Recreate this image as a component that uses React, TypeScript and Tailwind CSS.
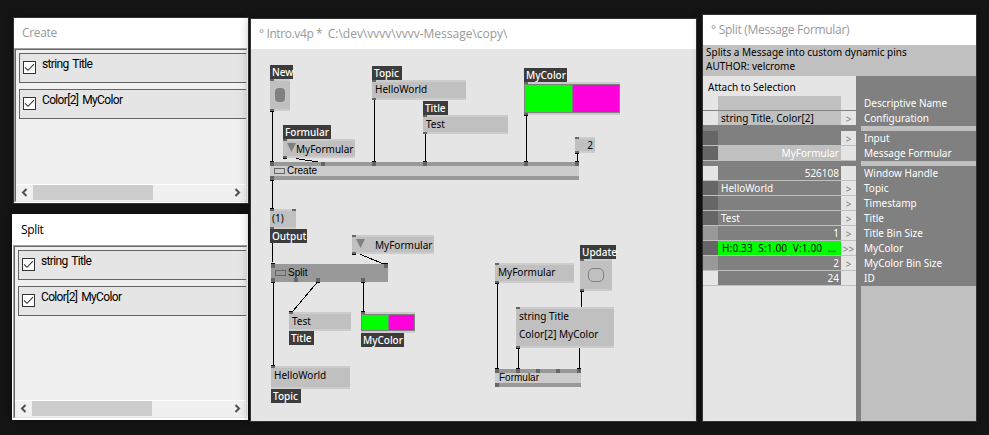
import type { ReactNode } from "react";

const lucida = "font-['Noto_Sans','Open_Sans',sans-serif]";

/* ---------- list windows ---------- */

function CheckRow({ text }: { text: string }) {
  return (
    <div className="flex h-[30px] shrink-0 border border-r-0 border-[#646464] bg-[#e5e5e5]">
      <svg className="mt-[7px] ml-[3px] h-[13px] w-[13px]" viewBox="0 0 13 13">
        <rect x="0.5" y="0.5" width="12" height="12" fill="#fff" stroke="#333" />
        <path d="M2 6.3 L5 9.3 L11 3.2" fill="none" stroke="#333" strokeWidth="1.1" />
      </svg>
      <span className="ml-[6px] mt-[3px] whitespace-pre font-['Roboto',sans-serif] text-[12px] leading-[14px] tracking-[-0.65px] [word-spacing:1.5px] text-black">{text}</span>
    </div>
  );
}

function ListWindow({ title, active, frame }: { title: string; active?: boolean; frame: string }) {
  return (
    <section className={`absolute flex flex-col bg-white ${frame}`}>
      <header className={`flex shrink-0 items-center font-['Open_Sans',sans-serif] text-[12px] tracking-[-0.35px] ${active ? "h-[31px] pl-[9px] text-black" : "h-[30px] pl-[8px] text-[#999]"}`}>
        {title}
      </header>
      <div className={`mr-px flex flex-1 flex-col border-t border-l border-[#a0a0a0] ${active ? "mb-[2px] ml-px" : "mb-px"}`}>
        <div className="flex flex-1 flex-col border-t border-l border-r border-b border-t-[#696969] border-l-[#696969] border-r-[#e3e3e3] border-b-[#e3e3e3] bg-[#f0f0f0]">
          <div className="flex flex-1 flex-col gap-[6px] pt-[3px] pl-[3px]">
            <CheckRow text="string Title" />
            <CheckRow text="Color[2] MyColor" />
          </div>
          <div className="flex h-[17px] shrink-0 items-stretch border-t border-white pb-px">
            <svg className="h-[15px] w-[17px]" viewBox="0 0 17 15">
              <path d="M10.5 4 L7 7.5 L10.5 11" fill="none" stroke="#505050" strokeWidth="2" />
            </svg>
            <div className="w-[120px] bg-[#cdcdcd]" />
            <div className="flex-1" />
            <svg className="h-[15px] w-[17px]" viewBox="0 0 17 15">
              <path d="M6.5 4 L10 7.5 L6.5 11" fill="none" stroke="#505050" strokeWidth="2" />
            </svg>
          </div>
        </div>
      </div>
    </section>
  );
}

/* ---------- patch nodes ---------- */

function Pin({ at }: { at: string }) {
  return <i className={`absolute h-[2px] w-[4px] bg-[#666] ${at}`} />;
}

function Tag({ at, children }: { at: string; children: ReactNode }) {
  return (
    <div className={`absolute h-[14px] whitespace-pre bg-[#3c3c3c] pl-[2px] text-[10px] font-medium leading-[14px] text-white ${at}`}>
      {children}
    </div>
  );
}

function IOBox({ at, children, out = true, pin = true }: { at: string; children?: ReactNode; out?: boolean; pin?: boolean }) {
  return (
    <div className={`absolute border-y-2 border-[#ccc] bg-[#c0c0c0] ${at}`}>
      {children}
      {pin && <Pin at="left-0 -top-[2px]" />}
      {out && <Pin at="left-0 -bottom-[2px]" />}
    </div>
  );
}

function NodeText({ at, children }: { at: string; children: ReactNode }) {
  return <span className={`absolute whitespace-pre text-[10px] leading-[14px] text-black ${at}`}>{children}</span>;
}

function Swatches({ at }: { at: string }) {
  return (
    <div className={`absolute flex divide-x divide-[#808080] border border-[#808080] ${at}`}>
      <div className="flex-1 bg-[#00ff00]" />
      <div className="flex-1 bg-[#ff00dc]" />
    </div>
  );
}

function Triangle({ at }: { at: string }) {
  return (
    <svg className={`absolute h-[9px] w-[9px] ${at}`} viewBox="0 0 9 9">
      <path d="M0 0 H9 L4.5 9 Z" fill="#808080" />
    </svg>
  );
}

function Square({ at }: { at: string }) {
  return <i className={`absolute h-[4px] w-[4px] bg-[#666] ${at}`} />;
}

function Patch() {
  return (
    <section className="absolute left-[250px] top-[18px] h-[404px] w-[447px] border border-[#333] bg-[#e5e5e5] shadow-[0_0_10px_rgba(0,0,0,0.35)]">
      <header className="flex h-[30px] items-center whitespace-pre bg-white pl-[8px] font-['Open_Sans',sans-serif] text-[12px] text-[#999]">
        <span className="tracking-[-0.4px]">{"° Intro.v4p *  "}</span>
        <span>{"C:\\dev\\vvvv\\vvvv-Message\\copy\\"}</span>
      </header>
      {/* the canvas is offset so that nodes use desktop coordinates */}
      <div className={`absolute -left-[251px] -top-[19px] h-[435px] w-[989px] ${lucida}`}>
        <svg className="absolute inset-0 h-[435px] w-[989px]" viewBox="0 0 989 435" shapeRendering="crispEdges">
          <g fill="none" stroke="#000" strokeWidth="1">
            <path d="M272.5 111V162M374.5 99V162M425.5 133V162M526.5 114V162M577.5 152V162M272.5 180V209M272.5 243V262M273.5 282V366M363.5 282V312M497.5 282V369M518.5 347V369M581.5 290V307M579.5 348V368" />
            <path d="M296 158.5L321 162.5M360.5 254.5L385 264.5M317.5 282L293 311" />
            <path d="M270 111.5h4M372 99.5h4M423 133.5h4M524 115.5h4M575 153.5h4M270 161.5h4M372 161.5h4M423 161.5h4M524 161.5h4M575 161.5h4M270 180.5h4M270 208.5h4M271 263.5h4M271 282.5h4M316 282.5h4M361 282.5h4M361 311.5h4M289 311.5h4M271 365.5h4M384 263.5h4M352 254.5h4M283 158.5h4M495 283.5h4M516 348.5h4M580 291.5h4M495 368.5h4M516 368.5h4M577 368.5h4" />
          </g>
        </svg>

        <IOBox at="left-[270px] top-[79px] h-[32px] w-[20px]">
          <i className="absolute left-[5px] top-[7px] h-[14px] w-[10px] rounded-[4px] bg-[#808080]" />
        </IOBox>
        <Tag at="left-[270px] top-[65px] w-[23px]">New</Tag>

        <IOBox at="left-[372px] top-[80px] h-[20px] w-[94px]">
          <NodeText at="left-[3px] top-0">HelloWorld</NodeText>
        </IOBox>
        <Tag at="left-[372px] top-[66px] w-[30px]">Topic</Tag>

        <IOBox at="left-[423px] top-[115px] h-[19px] w-[85px]">
          <NodeText at="left-[3px] top-0">Test</NodeText>
        </IOBox>
        <Tag at="left-[423px] top-[101px] w-[25px]">Title</Tag>

        <IOBox at="left-[283px] top-[139px] h-[19px] w-[72px]">
          <Triangle at="left-[4px] top-[2px]" />
          <NodeText at="left-[13px] top-px">MyFormular</NodeText>
        </IOBox>
        <Tag at="left-[283px] top-[125px] w-[48px]">Formular</Tag>

        <IOBox at="left-[524px] top-[82px] h-[33px] w-[96px]">
          <Swatches at="inset-0" />
        </IOBox>
        <Tag at="left-[524px] top-[68px] w-[43px]">MyColor</Tag>

        <IOBox at="left-[575px] top-[137px] h-[16px] w-[20px]">
          <NodeText at="right-[2px] -top-px">2</NodeText>
        </IOBox>

        <div className="absolute left-[270px] top-[162px] h-[18px] w-[309px] border-y-4 border-[#999] bg-[#ccc]">
          <i className="absolute left-[4px] top-[2px] h-[6px] w-[11px] border border-[#666]" />
          <span className="absolute left-[17px] -top-[2px] font-['Liberation_Sans',sans-serif] text-[10px] leading-[14px] text-black">Create</span>
          <Square at="left-0 -top-[4px]" />
          <Square at="left-[51px] -top-[4px]" />
          <Square at="left-[102px] -top-[4px]" />
          <Square at="left-[153px] -top-[4px]" />
          <Square at="left-[254px] -top-[4px]" />
          <Square at="left-[305px] -top-[4px]" />
          <Square at="left-0 -bottom-[4px]" />
        </div>

        <IOBox at="left-[270px] top-[209px] h-[20px] w-[26px]">
          <NodeText at="left-[2px] top-0">(1)</NodeText>
          <Pin at="left-[22px] -top-[2px]" />
        </IOBox>
        <Tag at="left-[270px] top-[229px] w-[37px]">Output</Tag>

        <IOBox at="left-[352px] top-[235px] h-[19px] w-[82px]">
          <Triangle at="left-[4px] top-[2px]" />
          <NodeText at="left-[23px] top-px">MyFormular</NodeText>
        </IOBox>

        <div className="absolute left-[271px] top-[264px] h-[18px] w-[117px] bg-[#999]">
          <i className="absolute left-[4px] top-[6px] h-[6px] w-[11px] border border-[#666]" />
          <span className="absolute left-[17px] top-[2px] font-['Liberation_Sans',sans-serif] text-[10px] leading-[14px] text-black">Split</span>
          <Square at="left-0 top-0" />
          <Square at="right-0 top-0" />
          <Square at="left-0 bottom-0" />
          <Square at="left-[23px] bottom-0" />
          <Square at="left-[45px] bottom-0" />
          <Square at="left-[90px] bottom-0" />
        </div>

        <IOBox at="left-[289px] top-[312px] h-[19px] w-[62px]" out={false}>
          <NodeText at="left-[3px] top-0">Test</NodeText>
        </IOBox>
        <Tag at="left-[289px] top-[331px] w-[25px]">Title</Tag>

        <IOBox at="left-[361px] top-[312px] h-[21px] w-[54px]" out={false}>
          <Swatches at="inset-0" />
        </IOBox>
        <Tag at="left-[361px] top-[333px] w-[43px]">MyColor</Tag>

        <IOBox at="left-[271px] top-[366px] h-[23px] w-[79px]" out={false}>
          <NodeText at="left-[3px] top-0">HelloWorld</NodeText>
        </IOBox>
        <Tag at="left-[271px] top-[389px] w-[30px]">Topic</Tag>

        <IOBox at="left-[495px] top-[263px] h-[20px] w-[79px]">
          <NodeText at="left-[3px] top-0">MyFormular</NodeText>
        </IOBox>

        <IOBox at="left-[580px] top-[259px] h-[32px] w-[32px]">
          <i className="absolute left-[8px] top-[7px] h-[14px] w-[16px] rounded-[5px] border border-[#808080]" />
        </IOBox>
        <Tag at="left-[580px] top-[245px] w-[36px]">Update</Tag>

        <IOBox at="left-[516px] top-[307px] h-[41px] w-[98px]">
          <NodeText at="left-[3px] top-0">string Title</NodeText>
          <NodeText at="left-[3px] top-[18px]">Color[2] MyColor</NodeText>
        </IOBox>

        <div className="absolute left-[495px] top-[369px] h-[18px] w-[86px] border-y-4 border-[#999] bg-[#ccc]">
          <span className="absolute left-[4px] -top-[2px] font-['Liberation_Sans',sans-serif] text-[10px] leading-[14px] text-black">Formular</span>
          <Square at="left-0 -top-[4px]" />
          <Square at="left-[21px] -top-[4px]" />
          <Square at="left-[41px] -top-[4px]" />
          <Square at="left-[61px] -top-[4px]" />
          <Square at="right-0 -top-[4px]" />
          <Square at="left-0 -bottom-[4px]" />
        </div>
      </div>
    </section>
  );
}

/* ---------- inspector ---------- */

type Row = { value?: string; side: string; fill?: string; arrow?: string };

function ValueRow({ value = "", side, fill = "bg-[#808080] text-white", arrow = "" }: Row) {
  return (
    <div className="flex h-[15px] border-b border-[#c0c0c0] leading-[14px]">
      <div className={`w-[15px] ${side}`} />
      <div className={`w-[123px] whitespace-pre ${fill}`}>{value}</div>
      <div className="flex w-[15px] justify-center bg-[#e5e5e5] pt-px text-[#808080]">{arrow}</div>
    </div>
  );
}

const left = "pl-[3px] bg-[#808080] text-white";
const right = "pr-[2px] text-right bg-[#808080] text-white";
const dark = "bg-[#666]";
const light = "bg-[#e5e5e5]";
const mid = "bg-[#999]";

function Names({ items }: { items: string[] }) {
  return (
    <div className="bg-[#808080] pl-[3px] leading-[14px] text-white">
      {items.map((n) => (
        <div key={n} className="h-[15px] whitespace-pre">{n}</div>
      ))}
    </div>
  );
}

function Inspector() {
  return (
    <section className="absolute left-[702px] top-[14px] flex h-[408px] w-[275px] flex-col border border-[#333] bg-[#e5e5e5] shadow-[0_0_10px_rgba(0,0,0,0.35)]">
      <header className="flex h-[30px] shrink-0 items-center bg-white pl-[8px] font-['Open_Sans',sans-serif] text-[12px] tracking-[-0.3px] text-[#999]">
        ° Split (Message Formular)
      </header>
      <div className={`h-[31px] shrink-0 whitespace-pre bg-[#c0c0c0] pl-[3px] text-[10px] leading-[14px] text-black ${lucida}`}>
        <div>Splits a Message into custom dynamic pins</div>
        <div>AUTHOR: velcrome</div>
      </div>
      <div className={`flex flex-1 text-[10px] ${lucida}`}>
        <div className="w-[153px]">
          <div className="h-[20px] pl-[5px] pt-[4px] leading-[14px] text-black">Attach to Selection</div>
          <div className="flex h-[15px] border-b border-[#808080]">
            <div className="ml-[15px] w-[123px] bg-[#c0c0c0]" />
          </div>
          <div className="h-[14px] overflow-hidden">
            <ValueRow value="string Title, Color[2]" side={light} fill="pl-[3px] bg-[#c0c0c0] text-black" arrow=">" />
          </div>
          <div className="h-[6px] bg-[#808080]" />
          <ValueRow side={dark} arrow=">" />
          <ValueRow value="MyFormular" side={dark} fill="pr-[2px] text-right bg-[#c0c0c0] text-white" />
          <div className="h-[5px] bg-[#808080]" />
          <ValueRow value="526108" side={light} fill={right} />
          <ValueRow value="HelloWorld" side={dark} fill={left} arrow=">" />
          <ValueRow side={dark} arrow=">" />
          <ValueRow value="Test" side={dark} fill={left} arrow=">" />
          <ValueRow value="1" side={mid} fill={right} arrow=">" />
          <ValueRow value="H:0.33  S:1.00  V:1.00  ..." side={dark} fill="pl-[4px] bg-[#00ff00] text-black tracking-[0.15px]" arrow=">>" />
          <ValueRow value="2" side={mid} fill={right} arrow=">" />
          <ValueRow value="24" side={light} fill={right} />
        </div>
        <div className="w-[5px] bg-[#808080]" />
        <div className="flex flex-1 flex-col gap-[5px] bg-[#c0c0c0]">
          <div className="bg-[#808080] pt-[20px]">
            <Names items={["Descriptive Name", "Configuration"]} />
          </div>
          <Names items={["Input", "Message Formular"]} />
          <Names items={["Window Handle", "Topic", "Timestamp", "Title", "Title Bin Size", "MyColor", "MyColor Bin Size", "ID"]} />
        </div>
      </div>
    </section>
  );
}

export default function App() {
  return (
    <main className="relative h-[435px] w-[989px] overflow-hidden bg-[#151515]">
      <ListWindow title="Create" frame="left-[13px] top-[17px] h-[187px] w-[236px] border border-[#333] shadow-[0_0_8px_rgba(0,0,0,0.4)]" />
      <ListWindow title="Split" active frame="left-[12px] top-[214px] h-[206px] w-[236px] shadow-[0_0_10px_rgba(0,0,0,0.5)]" />
      <Patch />
      <Inspector />
    </main>
  );
}
